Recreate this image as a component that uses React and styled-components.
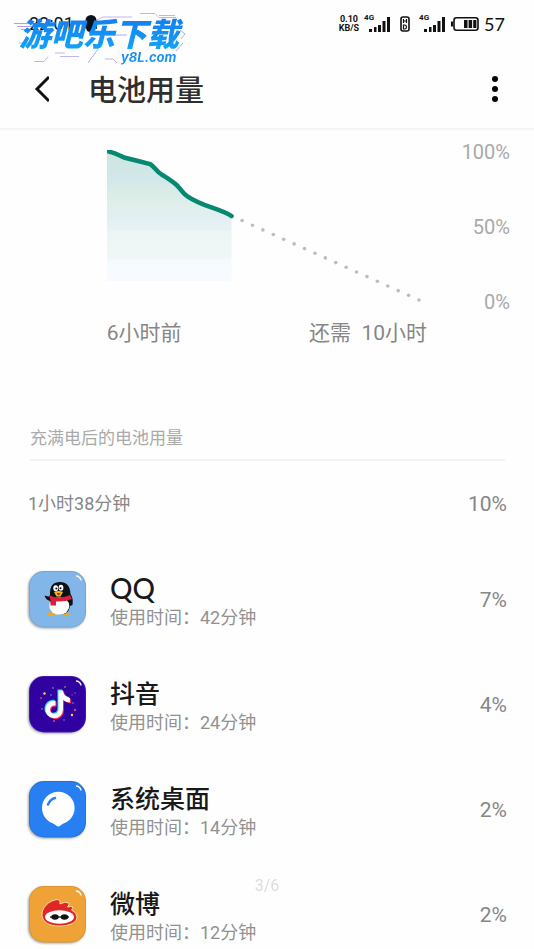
import React from "react";
import styled, { createGlobalStyle } from "styled-components";

const GlobalStyle = createGlobalStyle`
  * {
    box-sizing: border-box;
  }

  body {
    margin: 0;
    background: #fefefe;
    font-family: Roboto, "Noto Sans CJK SC", sans-serif;
  }
`;

const Page = styled.div`
  position: relative;
  overflow: hidden;
`;

const StatusBar = styled.div`
  display: flex;
  align-items: center;
  justify-content: space-between;
  height: 48px;
  padding: 0 29px;
  color: #111;
`;

const StatusGroup = styled.div`
  display: flex;
  align-items: center;
  gap: ${(props) => props.$gap}px;
`;

const Clock = styled.time`
  font-size: 18px;
  line-height: 20px;
`;

const Speed = styled.div`
  font-size: 9px;
  font-weight: 700;
  line-height: 9px;
  text-align: center;
`;

const Signal = styled.div`
  display: flex;
  align-items: center;
  height: 20px;
`;

const Network = styled.span`
  align-self: flex-start;
  width: 5px;
  font-size: 8px;
  font-weight: 700;
  line-height: 8px;
  white-space: nowrap;
`;

const BatteryLevel = styled.span`
  font-family: Lato, sans-serif;
  font-size: 18px;
  line-height: 20px;
`;

const Brand = styled.div`
  position: absolute;
  top: 12px;
  left: 14px;
  width: 176px;
  height: 58px;
`;

const BrandLines = styled.svg`
  position: absolute;
  top: 0;
  left: 0;
  opacity: 0.6;
`;

const BrandText = styled.div`
  position: relative;
  margin-top: ${(props) => props.$top}px;
  padding-left: ${(props) => props.$indent}px;
  font-family: ${(props) => props.$font}, "Noto Sans CJK SC", sans-serif;
  font-size: ${(props) => props.$size}px;
  font-weight: ${(props) => props.$weight};
  font-style: italic;
  line-height: ${(props) => props.$line}px;
  white-space: nowrap;
  color: transparent;
  background: linear-gradient(#1478f0, #12a5f8);
  background-clip: text;
`;

const Header = styled.header`
  display: flex;
  align-items: center;
  height: 82px;
  padding: 2px 26px 0;
  border-bottom: 2px solid #f5f5f5;
`;

const IconButton = styled.button`
  display: flex;
  align-items: center;
  justify-content: center;
  width: 26px;
  height: 40px;
  padding: 0;
  border: 0;
  background: none;
  cursor: pointer;
`;

const Title = styled.h1`
  flex: 1;
  margin: 0;
  padding: 4px 0 0 36px;
  font-size: 29px;
  font-weight: 500;
  line-height: 40px;
  color: #2e2e2e;
`;

const ChartSection = styled.section`
  display: grid;
  grid-template-columns: 1fr 83px;
  row-gap: 6px;
  padding: 12px 24px 0 20%;
`;

const Chart = styled.svg`
  display: block;
  width: 100%;
  height: auto;
`;

const Scale = styled.div`
  display: flex;
  flex-direction: column;
  align-items: flex-end;
  justify-content: space-between;
  font-size: 20px;
  line-height: 20px;
  color: #a9a9a9;
`;

const Period = styled.div`
  display: flex;
  justify-content: space-between;
  font-size: 21px;
  line-height: 30px;
  color: #868686;
  white-space: pre;
`;

const Usage = styled.section`
  padding: 76px 27px 0 28px;
`;

const SectionTitle = styled.h2`
  margin: 0 2px;
  padding: 1px 0 8px;
  border-bottom: 2px solid #f3f3f3;
  font-size: 17px;
  font-weight: 400;
  line-height: 26px;
  color: #aaa;
`;

const Summary = styled.div`
  display: flex;
  align-items: center;
  justify-content: space-between;
  margin: 28px 0 51px;
  font-size: 18px;
  line-height: 30px;
  color: #868686;
`;

const Percent = styled.span`
  font-size: 21px;
  color: #868686;
`;

const AppList = styled.ul`
  display: flex;
  flex-direction: column;
  gap: 45px;
  margin: 0;
  padding: 0;
  list-style: none;
`;

const AppRow = styled.li`
  display: flex;
  align-items: center;
  height: 60px;
`;

const AppInfo = styled.div`
  flex: 1;
  padding: 4px 0 0 23px;
`;

const AppName = styled.div`
  font-family: Lato, "Noto Sans CJK SC", sans-serif;
  font-size: ${(props) => (props.$latin ? 28 : 25)}px;
  font-weight: 500;
  line-height: 32px;
  color: #191919;
`;

const AppTime = styled.div`
  font-size: 18px;
  line-height: 28px;
  color: #919191;
`;

const Tile = styled.svg`
  flex: none;
  overflow: visible;
  margin-left: -1px;
  filter: drop-shadow(-1px 1px 1px rgba(0, 0, 0, 0.35));
`;

const PageNumber = styled.div`
  position: fixed;
  bottom: 54px;
  left: 0;
  right: 0;
  font-size: 16px;
  line-height: 18px;
  text-align: center;
  color: #dcdcdc;
`;

const SignalBars = () => (
  <svg width="22" height="16" viewBox="0 0 22 16" fill="#111">
    <rect x="0" y="13" width="3" height="3" />
    <rect x="5" y="11" width="2.5" height="5" />
    <rect x="9" y="9" width="3" height="7" />
    <rect x="13.5" y="5" width="3" height="11" />
    <rect x="18" y="1" width="3" height="15" />
  </svg>
);

const MobileSignal = () => (
  <Signal>
    <Network>4G</Network>
    <SignalBars />
  </Signal>
);

const HdIcon = () => (
  <svg width="10" height="16" viewBox="0 0 10 16" fill="none" stroke="#111">
    <rect x="1" y="1" width="8" height="14" rx="2" strokeWidth="1.6" />
    <path d="M3.5 3v4M6.5 3v4M3.5 5h3M3.5 9v4h1.5q1.5-.2 1.5-2t-1.5-2z" strokeWidth="1.2" />
  </svg>
);

const BatteryIcon = () => (
  <svg width="28" height="16" viewBox="0 0 28 16">
    <path d="M0 5.5h2v5H0z" fill="#111" />
    <rect x="3" y="1.8" width="24" height="12.5" rx="2.5" fill="none" stroke="#111" strokeWidth="1.6" />
    <path d="M13 4h3.5v8H13zM17.6 4h3.5v8h-3.5zM22.2 4h3.2v8h-3.2z" fill="#111" />
  </svg>
);

const QqNotice = () => (
  <svg width="14" height="18" viewBox="0 0 14 18" fill="#0b1118">
    <ellipse cx="8" cy="5.5" rx="5.5" ry="5.5" />
    <path d="M3 8C1.5 10 .5 12 1 14l2-1c.5 3 2 4 4.500 4s4-1 4.500-4l2 1c.5-2-.5-4-2-6z" />
  </svg>
);

const BrandMark = () => (
  <Brand>
    <BrandLines width="176" height="56" viewBox="0 2 176 56" fill="none" strokeWidth="1">
      <path d="M0 13.5h20M3 16.500h18M7 19.500h10" stroke="#7d65dc" />
      <path d="M83 10l6-3h29M126 3.500h15l4 4h17M145 5.500h16" stroke="#9b86de" />
      <path d="M5 33h13M20 51.500h10l4-5M41 43h10M46 46.500h19M91 49h8l4 4" stroke="#9788dc" />
      <path d="M84 39L74 53M166 20l5 4-4 5M162 41l7-8M92 25h21" stroke="#6d7be2" />
    </BrandLines>
    <BrandText $top={1} $indent={5} $font={'"Noto Sans CJK SC"'} $size={32} $weight={900} $line={38}>
      游吧乐下载
    </BrandText>
    <BrandText $top={-2} $indent={107} $font="Inter" $size={13} $weight={700} $line={17}>
      y8L.com
    </BrandText>
  </Brand>
);

const forecastDots = Array.from({ length: 18 }, (_, i) => ({
  x: 135 + i * 10.4,
  y: 78.5 + i * 4.67,
}));

const BatteryChart = () => (
  <Chart viewBox="0 0 320 170" role="img" aria-label="电池电量">
    <defs>
      <linearGradient id="level" x1="0" y1="8" x2="0" y2="139" gradientUnits="userSpaceOnUse">
        <stop offset="0" stopColor="#cde5de" />
        <stop offset="0.24" stopColor="#d3e8eb" />
        <stop offset="0.28" stopColor="#d8ebe7" />
        <stop offset="0.43" stopColor="#e0efea" />
        <stop offset="0.51" stopColor="#e2eff2" />
        <stop offset="0.61" stopColor="#e8f2f6" />
        <stop offset="0.62" stopColor="#ebf5f4" />
        <stop offset="0.83" stopColor="#f0f8f7" />
        <stop offset="0.84" stopColor="#f5faff" />
        <stop offset="1" stopColor="#f7fbff" />
      </linearGradient>
      <clipPath id="plot">
        <rect x="0" y="8" width="320" height="162" />
      </clipPath>
    </defs>
    <path
      d="M0 9C7 10 11 13 17 15.500C25 17.500 35 20 43 22C48 25 50 30 54 32C60 36 65 39 69 42.500C74 47 76 52 80 54C96 65 112 66 124.500 74V139H0z"
      fill="url(#level)"
    />
    <path
      d="M-3 8.500C7 10 11 13 17 15.500C25 17.500 35 20 43 22C48 25 50 30 54 32C60 36 65 39 69 42.500C74 47 76 52 80 54C96 65 112 66 124.500 74"
      fill="none"
      stroke="#068873"
      strokeWidth="4.5"
      strokeLinecap="round"
      clipPath="url(#plot)"
    />
    {forecastDots.map((dot) => (
      <circle key={dot.x} cx={dot.x} cy={dot.y} r="1.8" fill="#b5bfc4" />
    ))}
  </Chart>
);

const AppTile = ({ color, edge, children }) => (
  <Tile width="60" height="60" viewBox="0 0 60 60">
    <rect x="2" y="1" width="57" height="56.5" rx="15" fill={edge} />
    <rect x="3" y="2" width="55" height="54.5" rx="14" fill={color} />
    {children}
    <path d="M49.500 6q3.500.5 4.500 4" fill="none" stroke="#fff" strokeWidth="1.3" strokeLinecap="round" />
  </Tile>
);

const QqIcon = () => (
  <AppTile color="#82b6e9" edge="#74a6d8">
    <path d="M20.500 43q3-2 8 1.500v1.500h-8zM35 45.500q3-4 8-2.500v2.500z" fill="#eeaa1d" />
    <path d="M23 23q0-11 10-11t10.500 12q3 4 2 11l-2.500 1q-1 8.500-9.500 8.500T23 37v-6q-4-1-5.500-5.500 3 1 5.500 1z" fill="#0d1015" />
    <ellipse cx="32.3" cy="36" rx="10" ry="8.8" fill="#fff" />
    <path d="M22 25q9 5 21 0l2 4q-7 3-16 2.500v4h-5.500v-5z" fill="#d9203b" />
    <ellipse cx="28.7" cy="18.3" rx="2.400" ry="3" fill="#fff" />
    <ellipse cx="34" cy="17.8" rx="2.400" ry="3" fill="#fff" />
    <circle cx="29.3" cy="18.5" r="1" fill="#111" />
    <circle cx="33.5" cy="18.3" r="1" fill="#111" />
    <path d="M27 22q4-2 9 0l-2.500 4.500h-4z" fill="#f1b522" />
    <path d="M30 23h3.500l-1 2h-2z" fill="#9d3b1b" />
  </AppTile>
);

const notePath =
  "M31.500 15.500H36q.5 6 7 7.500v4.500q-4-.2-7-2.500v9.500a8.800 8.800 0 1 1-7.500-8.700v4.800a4.200 4.200 0 1 0 3 4z";

const DouyinIcon = () => (
  <AppTile color="#3100a0" edge="#4418ae">
    <g fill="#f1df43">
      <circle cx="17.5" cy="18.5" r="1.2" />
      <circle cx="45" cy="40" r="1.2" />
      <circle cx="38" cy="12" r=".7" />
    </g>
    <g fill="#de3f75">
      <circle cx="14" cy="23" r="1" />
      <circle cx="48" cy="35" r="1.2" />
      <circle cx="27" cy="46" r="1" />
      <circle cx="45" cy="20" r=".7" />
    </g>
    <g fill="#4fb5ed">
      <circle cx="24" cy="20" r=".8" />
      <circle cx="46" cy="28" r=".8" />
      <circle cx="15" cy="34" r=".8" />
      <circle cx="37" cy="45" r=".7" />
    </g>
    <g fill="#c8b7f7">
      <circle cx="26" cy="13" r=".7" />
      <circle cx="48" cy="18" r=".6" />
    </g>
    <path d={notePath} fill="#28e2e5" transform="translate(-1 -1)" />
    <path d={notePath} fill="#f12c60" transform="translate(1 1)" />
    <path d={notePath} fill="#fff" />
  </AppTile>
);

const LauncherIcon = () => (
  <AppTile color="#287ff2" edge="#2273da">
    <circle cx="31.3" cy="28" r="16.3" fill="#fff" />
    <path d="M19 38.500q4 2.500 10.500 7.300 1.800 1.200 3.600 0Q39.500 41 43.600 38.500z" fill="#fff" />
    <path d="M21 24.500q2-5 7-6.500" fill="none" stroke="#287ff2" strokeWidth="2.5" strokeLinecap="round" />
  </AppTile>
);

const WeiboIcon = () => (
  <AppTile color="#efa236" edge="#de952f">
    <path
      d="M15 31C14 23 22 15 31 14.500q3 .5 2 4.500 5-3 9-1 .5 2-1.500 4 3-1 5.500 0 0 1.500-1.500 3 5.500 2.500 5.500 7c0 6-8 9-18 9s-16-4-17-10z"
      fill="#df2825"
      stroke="#f8dcaa"
      strokeWidth="1"
    />
    <ellipse cx="32.5" cy="32" rx="14.5" ry="6.8" fill="#fff" />
    <path d="M23 32h19" stroke="#111" strokeWidth="1.3" />
    <ellipse cx="28" cy="32" rx="3.7" ry="2.7" fill="#111" />
    <ellipse cx="37.5" cy="32" rx="3.7" ry="2.7" fill="#111" />
  </AppTile>
);

const apps = [
  { name: "QQ", time: "42分钟", percent: "7%", Icon: QqIcon, latin: true },
  { name: "抖音", time: "24分钟", percent: "4%", Icon: DouyinIcon },
  { name: "系统桌面", time: "14分钟", percent: "2%", Icon: LauncherIcon },
  { name: "微博", time: "12分钟", percent: "2%", Icon: WeiboIcon },
];

const App = () => {
  return (
    <Page>
      <GlobalStyle />
      <StatusBar>
        <StatusGroup $gap={9}>
          <Clock>22:01</Clock>
          <QqNotice />
        </StatusGroup>
        <StatusGroup $gap={5}>
          <Speed>
            0.10
            <br />
            KB/S
          </Speed>
          <StatusGroup $gap={9}>
            <MobileSignal />
            <HdIcon />
            <MobileSignal />
          </StatusGroup>
          <BatteryIcon />
          <BatteryLevel>57</BatteryLevel>
        </StatusGroup>
      </StatusBar>
      <BrandMark />

      <Header>
        <IconButton aria-label="返回">
          <svg width="20" height="28" viewBox="-3 0 20 28" fill="none" stroke="#111" strokeWidth="3">
            <path d="M17 2L5 14l12 12" />
          </svg>
        </IconButton>
        <Title>电池用量</Title>
        <IconButton aria-label="更多">
          <svg width="8" height="28" viewBox="0 0 8 28" fill="#050505">
            <circle cx="4" cy="4" r="3" />
            <circle cx="4" cy="14" r="3" />
            <circle cx="4" cy="24" r="3" />
          </svg>
        </IconButton>
      </Header>

      <main>
        <ChartSection>
          <BatteryChart />
          <Scale>
            <span>100%</span>
            <span>50%</span>
            <span>0%</span>
          </Scale>
          <Period>
            <span>6小时前</span>
            <span>还需{"  "}10小时</span>
          </Period>
        </ChartSection>

        <Usage>
          <SectionTitle>充满电后的电池用量</SectionTitle>
          <Summary>
            <span>1小时38分钟</span>
            <Percent>10%</Percent>
          </Summary>
          <AppList>
            {apps.map(({ name, time, percent, Icon, latin }) => (
              <AppRow key={name}>
                <Icon />
                <AppInfo>
                  <AppName $latin={latin}>{name}</AppName>
                  <AppTime>使用时间：{time}</AppTime>
                </AppInfo>
                <Percent>{percent}</Percent>
              </AppRow>
            ))}
          </AppList>
        </Usage>
      </main>
      <PageNumber>3/6</PageNumber>
    </Page>
  );
};

export default App;
